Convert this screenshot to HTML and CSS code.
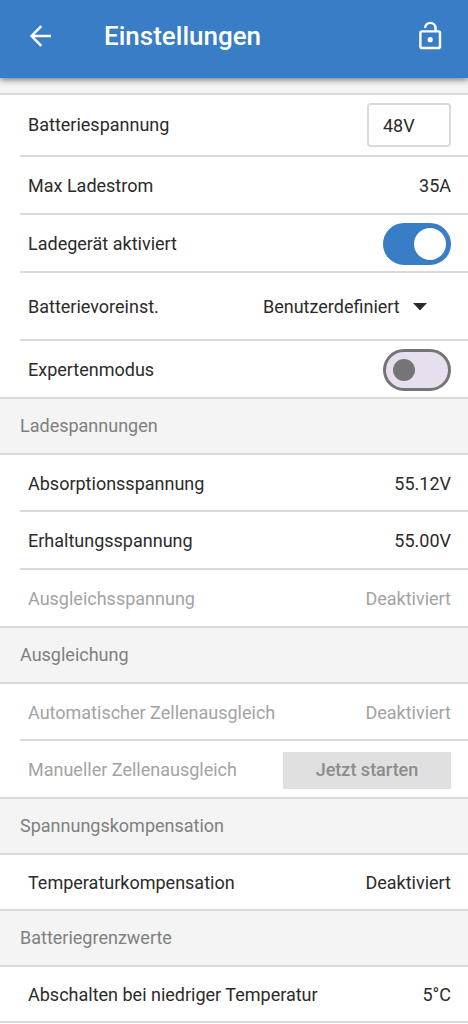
FILE: index.html
```html
<!DOCTYPE html>
<html lang="de">
<head>
    <meta charset="UTF-8">
    <meta name="viewport" content="width=device-width, initial-scale=1.0">
    <title>Einstellungen</title>
    <link rel="stylesheet" href="styles.css">
</head>
<body>
    <header class="app-bar">
        <button class="icon-button" type="button" aria-label="Zurück">
            <svg width="32" height="32" viewBox="0 0 32 32" fill="none" stroke="currentColor" stroke-width="2.4">
                <path d="M27 16H8M17.300 6.200L7.500 16l9.800 9.800"/>
            </svg>
        </button>
        <h1 class="title">Einstellungen</h1>
        <button class="icon-button" type="button" aria-label="Entsperren">
            <svg width="32" height="32" viewBox="0 0 32 32" fill="none" stroke="currentColor" stroke-width="2.4">
                <rect x="6.400" y="11.400" width="19.600" height="16.600" rx="1.600"/>
                <path d="M10.900 8C11.500 4.900 13.500 2.900 16.200 2.900c3 0 5.300 2.300 5.300 5.300v3.200"/>
                <circle cx="16.200" cy="19.700" r="2.600" fill="currentColor" stroke="none"/>
            </svg>
        </button>
    </header>

    <main>
        <div class="spacer"></div>

        <section class="group">
            <div class="row row-field">
                <label for="voltage">Batteriespannung</label>
                <input class="text-field" id="voltage" type="text" value="48V">
            </div>
            <div class="row">
                <span>Max Ladestrom</span>
                <span>35A</span>
            </div>
            <div class="row">
                <label for="charger">Ladegerät aktiviert</label>
                <input class="switch" id="charger" type="checkbox" role="switch" checked>
            </div>
            <div class="row row-select">
                <label for="preset">Batterievoreinst.</label>
                <div class="dropdown">
                    <select id="preset">
                        <option>Benutzerdefiniert</option>
                    </select>
                    <svg class="arrow" width="14" height="8" viewBox="0 0 14 8" fill="currentColor">
                        <path d="M0 0h14L7 7.500z"/>
                    </svg>
                </div>
            </div>
            <div class="row">
                <label for="expert">Expertenmodus</label>
                <input class="switch" id="expert" type="checkbox" role="switch">
            </div>
        </section>

        <section class="group">
            <h2 class="group-title">Ladespannungen</h2>
            <div class="row">
                <span>Absorptionsspannung</span>
                <span>55.12V</span>
            </div>
            <div class="row">
                <span>Erhaltungsspannung</span>
                <span>55.00V</span>
            </div>
            <div class="row disabled">
                <span>Ausgleichsspannung</span>
                <span>Deaktiviert</span>
            </div>
        </section>

        <section class="group">
            <h2 class="group-title">Ausgleichung</h2>
            <div class="row disabled">
                <span>Automatischer Zellenausgleich</span>
                <span>Deaktiviert</span>
            </div>
            <div class="row disabled">
                <span>Manueller Zellenausgleich</span>
                <button class="action" type="button" disabled>Jetzt starten</button>
            </div>
        </section>

        <section class="group">
            <h2 class="group-title">Spannungskompensation</h2>
            <div class="row">
                <span>Temperaturkompensation</span>
                <span>Deaktiviert</span>
            </div>
        </section>

        <section class="group">
            <h2 class="group-title">Batteriegrenzwerte</h2>
            <div class="row">
                <span>Abschalten bei niedriger Temperatur</span>
                <span>5°C</span>
            </div>
        </section>
    </main>
</body>
</html>
```
FILE: styles.css
```css
* {
    box-sizing: border-box;
}
body {
    margin: 0;
    background: #fff;
    color: #2b2b2b;
    font-family: Roboto, sans-serif;
    font-size: 18px;
    line-height: 24px;
}
button, input, select {
    font: inherit;
    color: inherit;
}

/* App bar */
.app-bar {
    position: relative;
    display: flex;
    align-items: center;
    height: 78px;
    padding: 0 22px 7px 24px;
    background: #387dc5;
    color: #fff;
    box-shadow: 0 2px 6px rgba(0,0,0,0.5);
}
.icon-button {
    display: flex;
    padding: 0;
    border: none;
    background: none;
    cursor: pointer;
}
.title {
    flex: 1;
    margin: 0 0 0 48px;
    font-size: 26px;
    font-weight: 500;
    line-height: 32px;
}
.spacer {
    height: 17px;
    background: #f4f4f4;
    border-bottom: 2px solid #dadada;
}

/* Rows */
.row {
    display: flex;
    align-items: center;
    justify-content: space-between;
    height: 58px;
    margin-left: 20px;
    padding: 2px 17px 0 8px;
    border-bottom: 2px solid #dadada;
}
.row:last-child {
    margin-left: 0;
    padding-left: 28px;
}
.row-field {
    height: 62px;
    padding-top: 0;
}
.row-select {
    height: 68px;
}
.group-title {
    height: 56px;
    margin: 0;
    padding: 0 20px;
    border-bottom: 2px solid #dadada;
    background: #f4f4f4;
    color: #808080;
    font-size: 18px;
    font-weight: 400;
    line-height: 54px;
}
.group-title + .row {
    height: 57px;
}
.group-title + .row:last-child {
    height: 56px;
}
.disabled {
    color: #a3a3a3;
}

/* Controls */
.text-field {
    width: 84px;
    height: 44px;
    padding: 0 14px;
    border: 2px solid #dadada;
    border-radius: 4px;
    background: #fff;
}
.switch {
    appearance: none;
    display: flex;
    align-items: center;
    width: 68px;
    height: 42px;
    margin: 0;
    padding: 0 7px;
    border: 3px solid #757575;
    border-radius: 21px;
    background: #e7dfee;
    cursor: pointer;
}
.switch::before {
    content: "";
    width: 22px;
    height: 22px;
    border-radius: 50%;
    background: #757575;
}
.switch:checked {
    justify-content: flex-end;
    padding: 0 2px;
    border-color: #387dc5;
    background: #387dc5;
}
.switch:checked::before {
    width: 32px;
    height: 32px;
    background: #fff;
}
.dropdown {
    position: relative;
}
.dropdown select {
    appearance: none;
    height: 44px;
    padding: 0 51px 0 0;
    border: none;
    background: none;
}
.arrow {
    position: absolute;
    top: 18px;
    right: 24px;
    pointer-events: none;
}
.action {
    width: 168px;
    height: 37px;
    padding: 0;
    border: none;
    background: #e0e0e0;
    color: #8c8c8c;
    font-weight: 500;
}
```
